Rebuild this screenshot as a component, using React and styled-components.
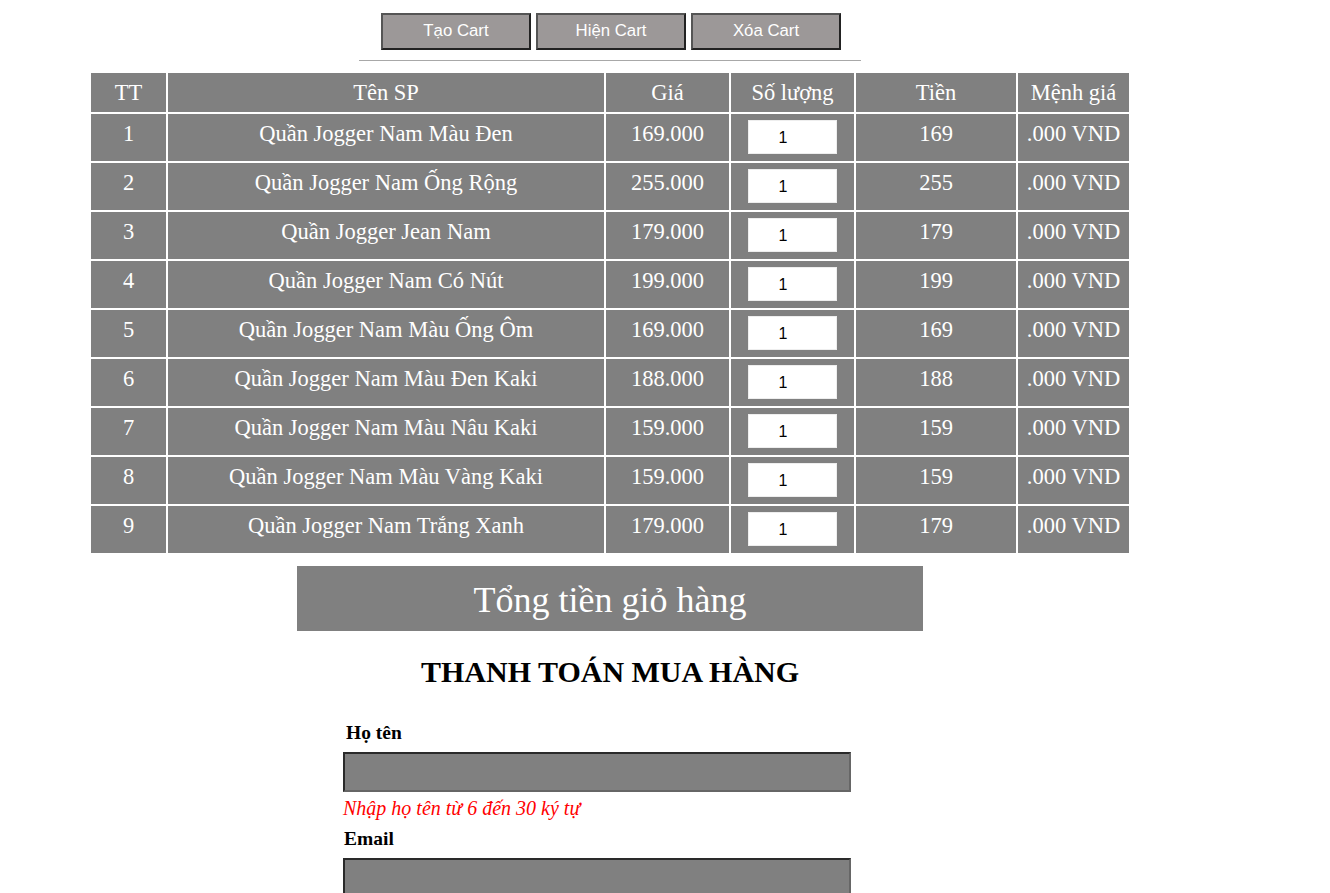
import React from 'react'
import styled, { createGlobalStyle } from 'styled-components'

const products = [
  { name: 'Quần Jogger Nam Màu Đen', price: 169 },
  { name: 'Quần Jogger Nam Ống Rộng', price: 255 },
  { name: 'Quần Jogger Jean Nam', price: 179 },
  { name: 'Quần Jogger Nam Có Nút', price: 199 },
  { name: 'Quần Jogger Nam Màu Ống Ôm', price: 169 },
  { name: 'Quần Jogger Nam Màu Đen Kaki', price: 188 },
  { name: 'Quần Jogger Nam Màu Nâu Kaki', price: 159 },
  { name: 'Quần Jogger Nam Màu Vàng Kaki', price: 159 },
  { name: 'Quần Jogger Nam Trắng Xanh', price: 179 }
]

const columns = [
  { title: 'TT', width: 75 },
  { title: 'Tên SP', width: 436 },
  { title: 'Giá', width: 123 },
  { title: 'Số lượng', width: 123 },
  { title: 'Tiền', width: 160 },
  { title: 'Mệnh giá', width: 111 }
]

export default function App() {
  return (
    <Page>
      <GlobalStyle />
      <Toolbar>
        <CartButton>Tạo Cart</CartButton>
        <CartButton>Hiện Cart</CartButton>
        <CartButton>Xóa Cart</CartButton>
      </Toolbar>
      <Divider />

      <CartTable>
        <colgroup>
          {columns.map(c => (
            <col key={c.title} style={{ width: c.width }} />
          ))}
        </colgroup>
        <thead>
          <tr>
            {columns.map(c => (
              <HeadCell key={c.title}>{c.title}</HeadCell>
            ))}
          </tr>
        </thead>
        <tbody>
          {products.map((p, i) => (
            <tr key={p.name}>
              <Cell>{i + 1}</Cell>
              <Cell>{p.name}</Cell>
              <Cell>{p.price}.000</Cell>
              <Cell>
                <QtyInput defaultValue="1" />
              </Cell>
              <Cell>{p.price}</Cell>
              <Cell>.000 VND</Cell>
            </tr>
          ))}
        </tbody>
      </CartTable>

      <TotalBox>Tổng tiền giỏ hàng</TotalBox>

      <Checkout>THANH TOÁN MUA HÀNG</Checkout>

      <Form>
        <Label indent>Họ tên</Label>
        <FormInput />
        <ErrorText>Nhập họ tên từ 6 đến 30 ký tự</ErrorText>
        <Label>Email</Label>
        <FormInput />
      </Form>
    </Page>
  )
}

const GlobalStyle = createGlobalStyle`
  body {
    margin: 8px;
    font-family: "Liberation Serif", "Times New Roman", serif;
    background: #fff;
  }
`

const Page = styled.div`
  width: 1204px;
  display: flex;
  flex-direction: column;
  align-items: center;
`

const Toolbar = styled.div`
  display: flex;
  gap: 5px;
  margin: 5px 0 0 2px;
`

const CartButton = styled.button`
  width: 150px;
  height: 37px;
  background: #9c9898;
  color: #fff;
  font-family: "Liberation Sans", Arial, sans-serif;
  font-size: 16.8px;
  border: 2px solid;
  border-color: #555 #222 #222 #555;
  padding: 0 0 1px;
`

const Divider = styled.hr`
  width: 502px;
  margin: 10px 0 10px;
  border: none;
  border-top: 1px solid #a8a8a8;
  height: 0;
`

const CartTable = styled.table`
  table-layout: fixed;
  border-spacing: 2px;
  width: 1042px;
  color: #fff;
  font-size: 22.5px;
`

const HeadCell = styled.th`
  background: #808080;
  font-weight: normal;
  height: 39px;
  padding: 0;
  vertical-align: middle;
`

const Cell = styled.td`
  background: #808080;
  text-align: center;
  height: 47px;
  padding: 7px 0 0;
  vertical-align: top;
  box-sizing: border-box;
`

const QtyInput = styled.input`
  width: 89px;
  height: 34px;
  box-sizing: border-box;
  border: 1px solid #eee;
  background: #fff;
  color: #000;
  font-family: "Liberation Sans", Arial, sans-serif;
  font-size: 16px;
  text-align: center;
  padding: 2px 18px 0 0;
  margin: -1px 0 0 -1px;
  vertical-align: top;
  outline: none;
`

const TotalBox = styled.div`
  width: 626px;
  height: 65px;
  margin-top: 11px;
  padding-top: 3px;
  box-sizing: border-box;
  background: #808080;
  color: #fff;
  font-size: 36px;
  display: flex;
  align-items: center;
  justify-content: center;
`

const Checkout = styled.h2`
  font-size: 30px;
  font-weight: bold;
  margin: 24px 0 0;
  color: #000;
`

const Form = styled.form`
  width: 508px;
  margin: 33px 26px 0 0;
  display: flex;
  flex-direction: column;
  align-items: flex-start;
`

const Label = styled.label`
  font-weight: bold;
  font-size: 19.5px;
  margin-left: ${p => (p.indent ? '3px' : '1px')};
  line-height: 22px;
`

const FormInput = styled.input`
  width: 508px;
  height: 40px;
  box-sizing: border-box;
  margin-top: 8px;
  background: #808080;
  border: 2px solid;
  border-color: #2a2a2a #666 #666 #2a2a2a;
  outline: none;
`

const ErrorText = styled.span`
  color: #f00;
  font-style: italic;
  font-size: 20px;
  margin: 5px 0 9px;
  line-height: 22px;
`
